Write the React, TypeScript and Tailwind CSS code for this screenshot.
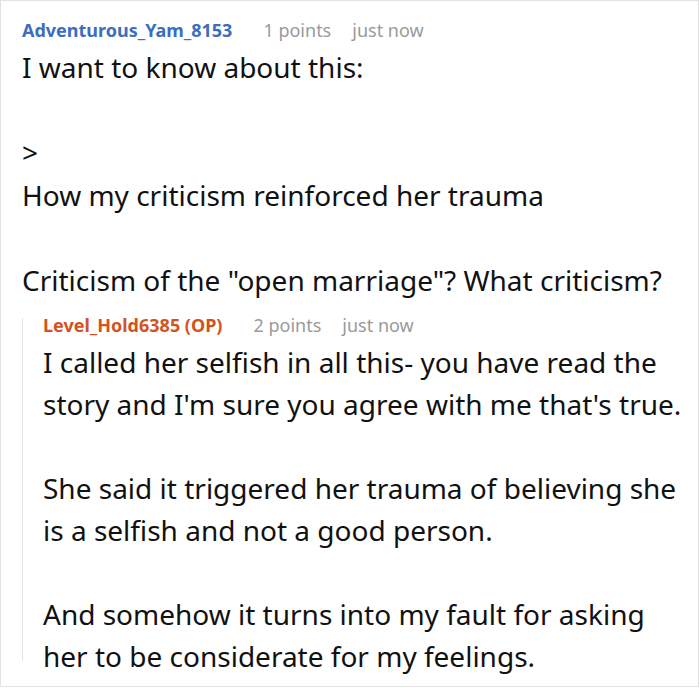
const font = { fontFamily: '"Noto Sans", "Open Sans", sans-serif' };

function Meta({ name, color, points }: { name: string; color: string; points: string }) {
  return (
    <div className="flex h-[24px] items-center text-[18px] leading-[24px]">
      <span className={`font-bold ${color}`}>{name}</span>
      <span className="ml-[31px] text-[#9a9a9a]">{points}</span>
      <span className="ml-[21px] text-[#9a9a9a]">just now</span>
    </div>
  );
}

export default function App() {
  return (
    <div
      style={font}
      className="h-[688px] w-[700px] overflow-hidden bg-white"
    >
      <div className="h-[687px] w-[699px] border border-[#e2e2e2] pl-[21px] pt-[17px]">
        <Meta name="Adventurous_Yam_8153" color="text-[#3c6dbf]" points="1 points" />
        <div className="mt-[4px] text-[28px] leading-[42.6px] text-[#111]">
          <p>I want to know about this:</p>
          <p>&nbsp;</p>
          <p>&gt;</p>
          <p>How my criticism reinforced her trauma</p>
          <p>&nbsp;</p>
          <p>Criticism of the "open marriage"? What criticism?</p>
        </div>
        <div className="mt-[16px] flex">
          <div className="h-[343px] w-px shrink-0 bg-[#e2e2e2]" />
          <div className="pl-[20px] pr-[10px]">
            <div className="-mt-[5px]">
              <Meta name="Level_Hold6385 (OP)" color="text-[#d2531f]" points="2 points" />
            </div>
            <div className="mt-[4px] text-[28px] leading-[42px] text-[#111]">
              <p>I called her selfish in all this- you have read the story and I'm sure you agree with me that's true.</p>
              <p>&nbsp;</p>
              <p>She said it triggered her trauma of believing she is a selfish and not a good person.</p>
              <p>&nbsp;</p>
              <p>And somehow it turns into my fault for asking her to be considerate for my feelings.</p>
            </div>
          </div>
        </div>
      </div>
    </div>
  );
}
